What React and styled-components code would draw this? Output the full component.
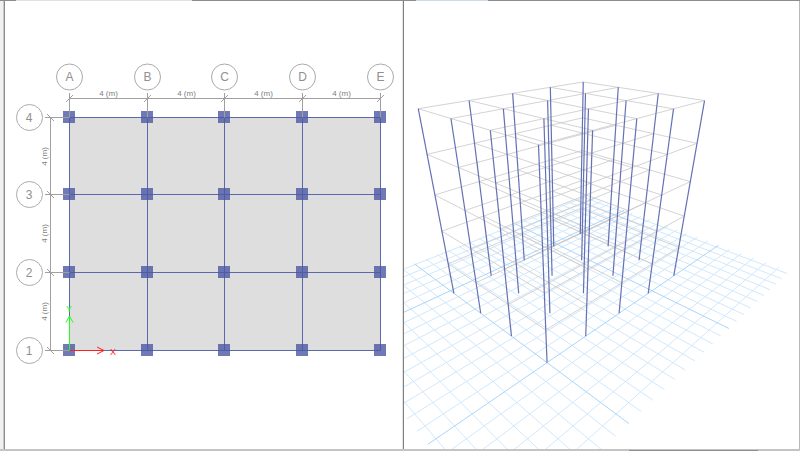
import React from 'react';
import styled, { createGlobalStyle } from 'styled-components';

const GlobalStyle = createGlobalStyle`
  * {
    box-sizing: border-box;
  }

  body {
    margin: 0;
    background: #fff;
    font-family: "Liberation Sans", Arial, sans-serif;
  }
`;

const Workspace = styled.main`
  display: grid;
  grid-template-rows: 1px 1fr 2px;
  height: 100vh;
  overflow: hidden;
`;

const Rule = styled.div`
  display: grid;
  grid-template-columns: 2fr 22fr 26fr 2fr 9fr 39fr;
  background: #8c8c8c;
`;

const TabEdge = styled.span`
  grid-column: ${({ $column }) => $column};
  background: ${({ $active }) => ($active ? '#c9dcee' : '#e1e1e1')};
`;

const StatusRule = styled.div`
  display: flex;
  justify-content: flex-end;
  padding-right: 42px;
  background: #c4c4c4;
`;

const ScrollThumb = styled.span`
  width: 17%;
  height: 1px;
  align-self: flex-end;
  background: #8e8e8e;
`;

const Views = styled.div`
  display: grid;
  grid-template-columns: 1fr 1fr;
  min-height: 0;
`;

const View = styled.section`
  display: flex;
  min-width: 0;
  min-height: 0;
`;

const Splitter = styled.div`
  flex: none;
  width: ${({ $width }) => $width}px;
  background: ${({ $color }) => $color};
`;

const Canvas = styled.svg`
  flex: 1;
  min-width: 0;
  width: 100%;
  height: 100%;
  background: #fff;
`;

const Slab = styled.rect`
  fill: #dedede;
`;

const Beam = styled.line`
  stroke: #5a68ae;
  stroke-width: 1;
`;

const Column = styled.rect`
  fill: #4b57a3;
  fill-opacity: 0.8;
`;

const GridLine = styled.path`
  fill: none;
  stroke: #a0a0a0;
  stroke-width: 1;
`;

const Bubble = styled.circle`
  fill: #fff;
  stroke: #aaa;
  stroke-width: 1;
`;

const BubbleText = styled.text`
  font-size: 12px;
  fill: #909090;
  text-anchor: middle;
`;

const DimText = styled.text`
  font-size: 8px;
  fill: #808080;
  text-anchor: middle;
`;

const Axis = styled.path`
  fill: none;
  stroke: ${({ $color }) => $color};
  stroke-width: 1;
`;

const AxisText = styled.text`
  font-size: 9px;
  fill: ${({ $color }) => $color};
  text-anchor: middle;
`;

const GroundLine = styled.line`
  stroke: ${({ $major }) => ($major ? '#a8d5fb' : '#d0e8fd')};
  stroke-width: 1;
`;

const FrameLine = styled.line`
  stroke: #c8c8c8;
  stroke-width: 0.8;
`;

const Post = styled.line`
  stroke: #6471b3;
  stroke-width: 1.2;
`;

// plan view
const columnAxes = [
  { name: 'A', x: 69.5 },
  { name: 'B', x: 147.5 },
  { name: 'C', x: 224.5 },
  { name: 'D', x: 302.5 },
  { name: 'E', x: 380.5 }
];
const rowAxes = [
  { name: '4', y: 117.5 },
  { name: '3', y: 194.5 },
  { name: '2', y: 272.5 },
  { name: '1', y: 350.5 }
];
const LEFT = 69.5;
const RIGHT = 380.5;
const TOP = 117.5;
const BOTTOM = 350.5;

// 3D view: bays along x and y, storeys along z
const BAYS_X = 4;
const BAYS_Y = 3;
const STOREYS = 5;

const project = (u, v, w) => {
  const d = 1 + 0.07942 * u + 0.07931 * v - 0.05917 * w;
  return {
    x: 403 + (53.17923 * u - 27.01383 * v - 9.73267 * w + 144.06866) / d,
    y: (0.20757 * u + 0.15221 * v - 52.13647 * w + 362.63837) / d
  };
};

const segment = (from, to) => {
  const a = project(...from);
  const b = project(...to);
  return { x1: a.x, y1: a.y, x2: b.x, y2: b.y };
};

const range = (from, to) => Array.from({ length: to - from + 1 }, (_, i) => from + i);

const CELL = 0.314;
const ground = { minX: -2.33, maxX: 6.1, minY: -1.82, maxY: 4.755 };

const groundLines = [
  ...range(-7, 19).map((i) => ({
    major: i % 10 === 0,
    ...segment([i * CELL, ground.minY, 0], [i * CELL, ground.maxY, 0])
  })),
  ...range(-5, 15).map((i) => ({
    major: i % 10 === 0,
    ...segment([ground.minX, i * CELL, 0], [ground.maxX, i * CELL, 0])
  }))
].sort((a, b) => Number(a.major) - Number(b.major));

const frameLines = range(1, STOREYS).flatMap((w) => [
  ...range(0, BAYS_X).map((u) => segment([u, 0, w], [u, BAYS_Y, w])),
  ...range(0, BAYS_Y).map((v) => segment([0, v, w], [BAYS_X, v, w]))
]);

const posts = range(0, BAYS_X).flatMap((u) =>
  range(0, BAYS_Y).map((v) => segment([u, v, 0], [u, v, STOREYS]))
);

const PlanView = () => (
  <Canvas viewBox="5 1 395 448" role="img" aria-label="Plan view">
    <Slab x={LEFT} y={TOP} width={RIGHT - LEFT} height={BOTTOM - TOP} />
    {rowAxes.map(({ name, y }) => (
      <Beam key={name} x1={LEFT} y1={y} x2={RIGHT} y2={y} />
    ))}
    {columnAxes.map(({ name, x }) => (
      <Beam key={name} x1={x} y1={TOP} x2={x} y2={BOTTOM} />
    ))}
    {columnAxes.map(({ name, x }) =>
      rowAxes.map((row) => (
        <Column key={name + row.name} x={x - 6.5} y={row.y - 6.5} width="12" height="12" />
      ))
    )}

    <GridLine d={`M${LEFT} 98.5H${RIGHT}`} />
    {columnAxes.map(({ name, x }, index) => (
      <g key={name}>
        <GridLine d={`M${x} 93V${TOP}M${x - 3.5} 102l7 -7`} />
        <Bubble cx={x} cy="77" r="13" />
        <BubbleText x={x} y="81">{name}</BubbleText>
        {index < BAYS_X && <DimText x={x + 39} y="96">4 (m)</DimText>}
      </g>
    ))}

    <GridLine d={`M50.5 ${TOP}V${BOTTOM}`} />
    {rowAxes.map(({ name, y }, index) => (
      <g key={name}>
        <GridLine d={`M45 ${y}H${LEFT}M47 ${y - 3.5}l7 7`} />
        <Bubble cx="29.5" cy={y} r="13" />
        <BubbleText x="29" y={y + 4}>{name}</BubbleText>
        {index < BAYS_Y && (
          <DimText transform={`translate(47 ${y + 39}) rotate(-90)`}>4 (m)</DimText>
        )}
      </g>
    ))}

    <Axis $color="#ff1e1e" d="M69.5 350.5H104M97 347l7 3.5l-7 3.5" />
    <AxisText $color="#ff1e1e" x="113" y="355">X</AxisText>
    <Axis $color="#1eff1e" d="M69.5 350.5V316M66 322.5l3.5 -6.5l3.5 6.5" />
    <AxisText $color="#1eff1e" x="69" y="312">Y</AxisText>
  </Canvas>
);

const ModelView = () => (
  <Canvas viewBox="404 1 395 448" role="img" aria-label="3D view">
    {groundLines.map(({ major, ...line }, index) => (
      <GroundLine key={index} $major={major} {...line} />
    ))}
    {frameLines.map((line, index) => (
      <FrameLine key={index} {...line} />
    ))}
    {posts.map((line, index) => (
      <Post key={index} {...line} />
    ))}
  </Canvas>
);

const App = () => (
  <>
    <GlobalStyle />
    <Workspace>
      <Rule>
        <TabEdge $column="2" />
        <TabEdge $column="5" $active />
      </Rule>
      <Views>
        <View>
          <Splitter $width={3} $color="#f0f0f0" />
          <Splitter $width={1} $color="#c8c8c8" />
          <Splitter $width={1} $color="#8c8c8c" />
          <PlanView />
        </View>
        <View>
          <Splitter $width={2} $color="#fff" />
          <Splitter $width={1} $color="#e4e4e4" />
          <Splitter $width={1} $color="#808080" />
          <ModelView />
          <Splitter $width={1} $color="#b8b8b8" />
        </View>
      </Views>
      <StatusRule>
        <ScrollThumb />
      </StatusRule>
    </Workspace>
  </>
);

export default App;
